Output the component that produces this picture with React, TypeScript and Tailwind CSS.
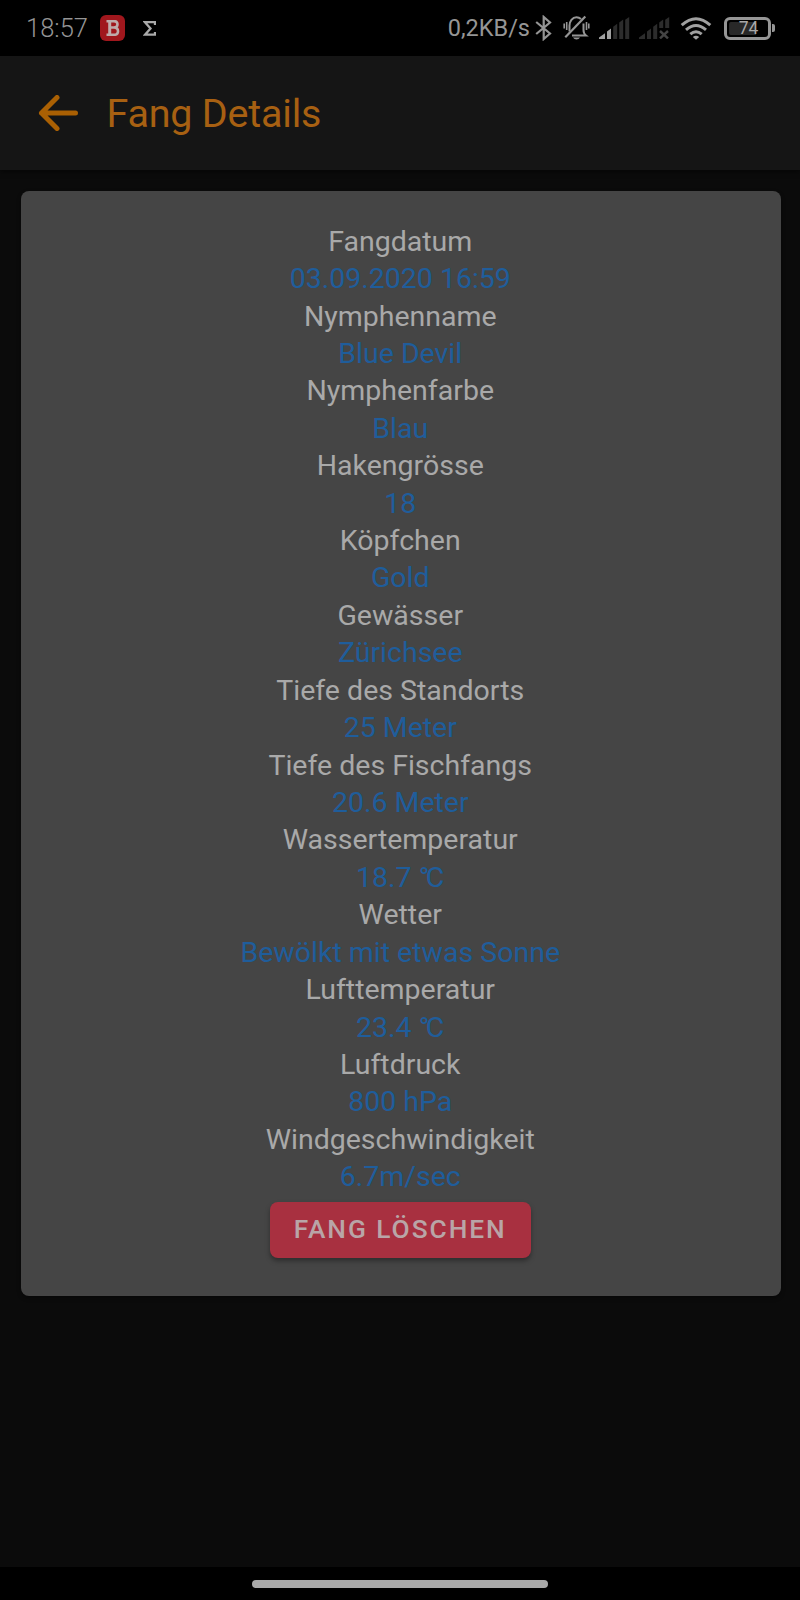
import React from "react";

const entries: [string, string][] = [
  ["Fangdatum", "03.09.2020 16:59"],
  ["Nymphenname", "Blue Devil"],
  ["Nymphenfarbe", "Blau"],
  ["Hakengrösse", "18"],
  ["Köpfchen", "Gold"],
  ["Gewässer", "Zürichsee"],
  ["Tiefe des Standorts", "25 Meter"],
  ["Tiefe des Fischfangs", "20.6 Meter"],
  ["Wassertemperatur", "18.7 ℃"],
  ["Wetter", "Bewölkt mit etwas Sonne"],
  ["Lufttemperatur", "23.4 ℃"],
  ["Luftdruck", "800 hPa"],
  ["Windgeschwindigkeit", "6.7m/sec"],
];

function Value({ text }: { text: string }) {
  if (!text.endsWith("℃")) return <>{text}</>;
  return (
    <>
      {text.slice(0, -1)}
      <span className="tracking-[-3.5px]">°</span>C
    </>
  );
}

function BluetoothIcon() {
  return (
    <svg className="ml-[5px] h-[26px] w-[17px]" viewBox="0 0 17 26" fill="none" stroke="#959595" strokeWidth="2.200">
      <path d="M1.200 7 15 18.500 8.700 24V2L15 7.500 1.200 19" />
    </svg>
  );
}

function MutedBellIcon() {
  return (
    <svg className="ml-[11px] h-[26px] w-[27px]" viewBox="0 0 27 26" fill="none" stroke="#959595">
      <path d="M6.500 16.500V10.500C6.500 6.500 9.300 2.300 13.500 2.300c1.600 0 3.200.6 4.500 1.800M20.500 8.500V15c0 2.600.6 4 2.500 5.500H9" strokeWidth="2" />
      <path d="M2.300 22.300 22.300 1.500" strokeWidth="2.200" />
      <path d="M10 22.500c1.500 2.500 5.500 2.500 7 0z" fill="#959595" stroke="none" />
      <path d="M1.200 8.500v5M3.700 7v8M23.500 7v8M25.800 8.500v5" strokeWidth="1.600" />
    </svg>
  );
}

function SignalIcon() {
  return (
    <svg className="ml-[9px] h-[22px] w-[31px]" viewBox="0 0 31 22">
      <path d="M0 22 0 20.500 6 16.200V22zM8 14.500l4-3V22H8z" fill="#a0a0a0" />
      <path d="M14.200 9.800l4-3V22h-4zM20.200 5.500l4-3V22h-4zM26.200 2.700l4-2.700V22h-4z" fill="#2c2c2c" />
    </svg>
  );
}

function NoSignalIcon() {
  return (
    <svg className="ml-[9px] h-[22px] w-[31px]" viewBox="0 0 31 22">
      <path d="M0 22 0 20.500 6 16.200V22zM8 14.500l4-3V22H8zM14.200 9.800l4-3V22h-4zM20.200 5.500l4-3V11h-4zM26.200 2.700l4-2.700v11h-4z" fill="#2c2c2c" />
      <path d="m21 14 8 7.400m0-7.400-8 7.400" stroke="#444" strokeWidth="2.400" />
    </svg>
  );
}

function WifiIcon() {
  return (
    <svg className="ml-[10px] h-[23px] w-8" viewBox="0 0 32 23" fill="none" stroke="#a0a0a0" strokeWidth="3">
      <path d="M1.700 8.200Q16-4.800 30.300 8.200M6 12.900q10-8.800 20 0M10.300 17.200q5.700-4.900 11.400 0" />
      <path d="M16 22.800 12.800 20q3.200-2.400 6.400 0z" fill="#a0a0a0" stroke="none" />
    </svg>
  );
}

function Battery() {
  return (
    <div className="ml-[12px] flex items-center gap-[1px]">
      <div className="flex h-[23px] w-[47px] rounded-[6px] border-[3px] border-[#969696] p-[2px]">
        <div className="flex h-full w-full items-center justify-center rounded-[2px] bg-[linear-gradient(90deg,#282828_74%,transparent_74%)] pl-[2px] pt-[2px] text-[17.5px] leading-none text-[#a8a8a8]">
          74
        </div>
      </div>
      <div className="h-[8px] w-[3px] rounded-r-[2px] bg-[#969696]" />
    </div>
  );
}

export default function App() {
  return (
    <div className="flex h-[1600px] w-[800px] flex-col overflow-hidden bg-[#0b0b0b] font-['Roboto',sans-serif] text-[#a9a9a9]">
      <div className="flex h-[56px] shrink-0 items-center bg-black text-[#959595]">
        <span className="ml-[26px] w-[62px] whitespace-nowrap pt-[1px] text-[25.5px] font-[350]">18:57</span>
        <div className="ml-3 flex h-[26px] w-[25px] items-center justify-center rounded-[6px] bg-[#a0171d]">
          <svg viewBox="0 0 14 16" className="h-4 w-[14px]" fill="none" stroke="#beabab" strokeWidth="2.600">
            <path d="M0.500 1.200H8Q11.500 1.200 11.500 4.300T8 7.500H4M0.500 14.800H8Q12 14.800 12 11.200T8 7.500" />
            <path d="M3.700 1v14" strokeWidth="3" />
          </svg>
        </div>
        <svg viewBox="0 0 13 15" className="ml-[18px] h-[15px] w-[13px]" fill="none" stroke="#a9a9a9" strokeWidth="2.300">
          <path d="M12 4V1.200H2L7.500 7.500 2 13.700H12V11" />
        </svg>
        <div className="ml-auto mr-[25px] flex items-center">
          <span className="whitespace-nowrap pt-[2px] text-[23.5px]">0,2KB/s</span>
          <BluetoothIcon />
          <MutedBellIcon />
          <SignalIcon />
          <NoSignalIcon />
          <WifiIcon />
          <Battery />
        </div>
      </div>

      <header className="flex h-[114px] shrink-0 items-center bg-[#151515] text-[#a76012] shadow-[0_2px_5px_rgba(0,0,0,0.5)]">
        <svg viewBox="0 0 40 36" className="ml-[38px] h-9 w-10" fill="none" stroke="#aa6003" strokeWidth="5" strokeLinecap="round" strokeLinejoin="round">
          <path d="M19 2.500 3.500 18 19 33.500M3.500 18H37.500" />
        </svg>
        <h1 className="ml-[28.5px] whitespace-nowrap pt-[1px] text-[39.5px] leading-none tracking-[-0.220px]">Fang Details</h1>
      </header>

      <main className="ml-[21px] mt-[21px] flex h-[1105px] w-[760px] shrink-0 flex-col items-center rounded-[8px] bg-[#454545] pr-[1.5px] pt-[31.7px] shadow-[0_2px_4px_rgba(0,0,0,0.4)]">
        <dl className="text-center text-[28.5px] leading-[37.42px]">
          {entries.map(([label, value]) => (
            <React.Fragment key={label}>
              <dt>{label}</dt>
              <dd className="text-[#1f5d9b]">
                <Value text={value} />
              </dd>
            </React.Fragment>
          ))}
        </dl>
        <button className="mt-[6.4px] flex h-[56px] w-[261px] items-center justify-center whitespace-nowrap rounded-[8px] bg-[#a83040] pb-[2px] text-[26.3px] font-medium leading-none tracking-[1.950px] text-[#b9a5a7] shadow-[0_3px_5px_rgba(0,0,0,0.35)]">
          FANG LÖSCHEN
        </button>
      </main>

      <div className="mt-auto flex h-[33px] shrink-0 justify-center bg-black pr-[1px] pt-[13px]">
        <div className="h-[8px] w-[296px] rounded-full bg-[#a9a9a9]" />
      </div>
    </div>
  );
}
